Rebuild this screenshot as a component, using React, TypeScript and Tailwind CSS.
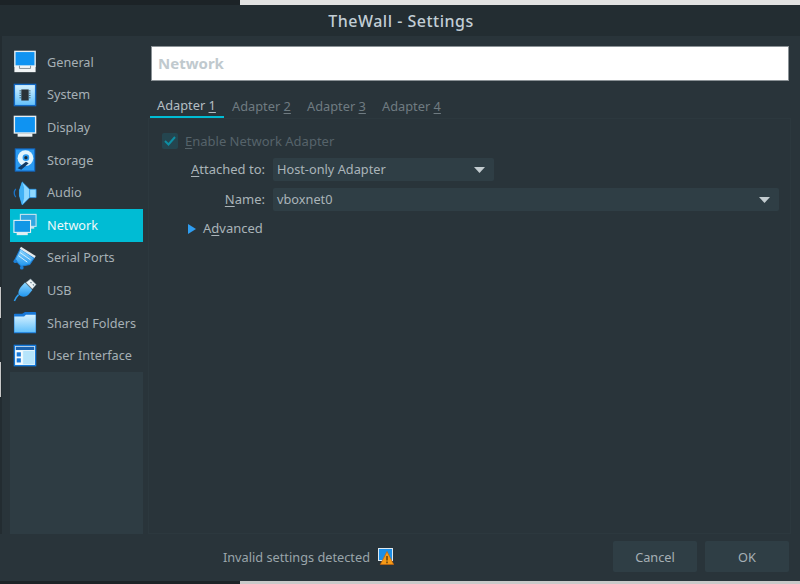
import type { ReactNode } from "react";

const font = "font-['Noto_Sans','Open_Sans',sans-serif]";

function Frame({ children }: { children: ReactNode }) {
  return (
    <svg width="24" height="24" viewBox="0 0 26 26" className="shrink-0">
      <defs>
        <linearGradient id="blueFill" x1="0" y1="0" x2="0" y2="1">
          <stop offset="0" stopColor="#8fd8ff" />
          <stop offset="1" stopColor="#1f95ee" />
        </linearGradient>
        <linearGradient id="paleFill" x1="0" y1="0" x2="0" y2="1">
          <stop offset="0" stopColor="#d6f1ff" />
          <stop offset="1" stopColor="#62c0fb" />
        </linearGradient>
      </defs>
      {children}
    </svg>
  );
}

const GeneralIcon = () => (
  <Frame>
    <rect x="2" y="1.5" width="22" height="16" fill="#0f93f2" stroke="#e6eef2" strokeWidth="1.5" />
    <path d="M1.5 17 h23 v7 h-23z" fill="#f1f4f5" />
    <path d="M7 17 v3 h12 v-3" fill="none" stroke="#7f8a90" strokeWidth="1" />
  </Frame>
);

const SystemIcon = () => (
  <Frame>
    <rect x="1.5" y="1.5" width="23" height="23" fill="url(#paleFill)" stroke="#1268c4" strokeWidth="1.5" />
    <rect x="9" y="7" width="8" height="12" fill="#2a3238" />
    <path d="M7 8.5h2M7 11h2M7 13.5h2M7 16h2M17 8.5h2M17 11h2M17 13.5h2M17 16h2" stroke="#44606f" strokeWidth="1" />
  </Frame>
);

const DisplayIcon = () => (
  <Frame>
    <rect x="1.5" y="1.5" width="23" height="18" fill="#0f93f2" stroke="#e6eef2" strokeWidth="1.5" />
    <path d="M5 20h16v3.5H5z" fill="#eef2f3" />
  </Frame>
);

const StorageIcon = () => (
  <Frame>
    <rect x="2.5" y="1" width="21" height="24" fill="#2a9af0" stroke="#1268c4" strokeWidth="1.2" />
    <circle cx="13.5" cy="11" r="8.5" fill="#e2f5fd" />
    <circle cx="14" cy="10.5" r="3.6" fill="#2a9af0" />
    <circle cx="14" cy="10.5" r="1.8" fill="#1c2b34" />
    <path d="M5 22 L14 15 L17 16.5 L9 23.5z" fill="#123a63" />
  </Frame>
);

const AudioIcon = () => (
  <Frame>
    <path d="M3 8.5 C0.8 11 0.8 15 3 17.5" fill="none" stroke="#1b74c8" strokeWidth="1.4" />
    <path d="M7 10 L10 1 L18 9 L25 9 L25 18 L18 18 L10 26 L7 16z" fill="#8ed8ff" stroke="#2a9af0" strokeWidth="0.8" />
    <path d="M10 1 L7 10 L7 16 L10 26 L12 19 L12 7z" fill="#3fb0f5" />
    <path d="M18 9 L18 18" stroke="#2a9af0" strokeWidth="1" />
  </Frame>
);

const NetworkIcon = () => (
  <Frame>
    <rect x="8" y="1.5" width="17" height="13" fill="#31a6e0" stroke="#c9e4ee" strokeWidth="1.2" />
    <path d="M18 15h5v2h-5z" fill="#c9e4ee" />
    <rect x="1" y="8" width="18" height="13" fill="#1197e6" stroke="#e6f1f5" strokeWidth="1.2" />
    <path d="M4 21h12v3H4z" fill="#e3eef2" />
  </Frame>
);

const SerialIcon = () => (
  <Frame>
    <path d="M8 3 L23 13 L18 20 L9 22 L2 15z" fill="url(#blueFill)" stroke="#1c7fd6" strokeWidth="1.1" />
    <path d="M8 2 L24 12" stroke="#e6ecee" strokeWidth="2.6" />
    <path d="M7.5 7 L19 15M6 10.5 L15.5 17.5" stroke="#dff3fd" strokeWidth="1" />
    <circle cx="2.5" cy="16.5" r="2" fill="#1c7fd6" />
    <circle cx="9.5" cy="23.5" r="2" fill="#1c7fd6" />
  </Frame>
);

const UsbIcon = () => (
  <Frame>
    <path d="M19 1 L25 7 L21 12 L14 5z" fill="#eef4f6" stroke="#8aa0ac" strokeWidth="0.6" />
    <path d="M13 5 L21 13 L17 18 C13 22 8 20 6 18 C5 14 8 10 13 5z" fill="url(#blueFill)" />
    <path d="M6 18 C4 20 2.5 22 1.5 25" fill="none" stroke="#2f9ef0" strokeWidth="1.6" />
    <path d="M19 4.5l1 1M21.5 7l1 1" stroke="#55707e" strokeWidth="1.2" />
  </Frame>
);

const FolderIcon = () => (
  <Frame>
    <path d="M1 4 Q1 3 2 3 L10 3 L13 1 L24 1 Q25 1 25 2 L25 24 L1 24z" fill="#1878d8" />
    <path d="M1.5 6 L12 6 L14 4 L24.5 4 L24.5 23 L1.5 23z" fill="url(#paleFill)" />
  </Frame>
);

const InterfaceIcon = () => (
  <Frame>
    <rect x="1.5" y="1.5" width="23" height="22" fill="#e8f6fd" stroke="#1478d8" strokeWidth="1.5" />
    <rect x="3" y="3" width="20" height="3.5" fill="#1a62ae" />
    <rect x="3" y="7.5" width="7" height="14.5" fill="#f4fafd" />
    <rect x="4" y="9" width="4.5" height="4.5" fill="#1878d8" />
    <rect x="4" y="15.5" width="4.5" height="4.5" fill="#1878d8" />
    <rect x="11" y="7.5" width="12" height="14.5" fill="#b6e4fb" />
  </Frame>
);

const WarningIcon = () => (
  <svg width="16" height="17" viewBox="0 0 16 17" className="shrink-0">
    <rect x="0.5" y="0.5" width="14" height="12" fill="#1c8fe8" stroke="#dfe9ee" strokeWidth="1" />
    <path d="M9 3.5 L15.7 16.5 L2.3 16.5z" fill="#f59a16" stroke="#c9640c" strokeWidth="0.7" />
    <path d="M9 8v4.5M9 13.6v1.6" stroke="#3a2a10" strokeWidth="1.2" />
  </svg>
);

const items = [
  { label: "General", icon: <GeneralIcon /> },
  { label: "System", icon: <SystemIcon /> },
  { label: "Display", icon: <DisplayIcon /> },
  { label: "Storage", icon: <StorageIcon /> },
  { label: "Audio", icon: <AudioIcon /> },
  { label: "Network", icon: <NetworkIcon />, active: true },
  { label: "Serial Ports", icon: <SerialIcon /> },
  { label: "USB", icon: <UsbIcon /> },
  { label: "Shared Folders", icon: <FolderIcon /> },
  { label: "User Interface", icon: <InterfaceIcon /> },
];

const Caret = () => (
  <svg width="11" height="6" viewBox="0 0 11 6" className="shrink-0">
    <path d="M0 0h11L5.5 6z" fill="#c3ccd0" />
  </svg>
);

function Combo({ value, className }: { value: string; className: string }) {
  return (
    <div className={`flex h-[23px] items-center justify-between rounded-[2px] bg-[#2f3e45] pl-[4px] text-[12.75px] text-[#aab4b9] ${className}`}>
      <span className="pt-px">{value}</span>
      <Caret />
    </div>
  );
}

export default function App() {
  return (
    <div className={`relative flex h-[584px] w-[800px] flex-col overflow-hidden bg-[#29343a] text-[13px] ${font}`}>
      <div className="absolute top-[287px] left-0 h-[31px] w-px bg-[#c8c8c8]" />
      <div className="absolute top-[362px] left-0 h-[35px] w-px bg-[#c8c8c8]" />

      <div className="flex h-[5px] shrink-0">
        <div className="w-[240px] bg-[#1c2327]" />
        <div className="flex-1 bg-[#e2e2e2]" />
      </div>
      <div className="flex h-[31px] shrink-0 items-center justify-center bg-[#232d32] pl-[2px] text-[16px] font-medium tracking-[0.5px] text-[#c2ced6]">
        TheWall - Settings
      </div>

      <div className="flex min-h-0 flex-1 border-l-2 border-[#232c31] pt-[10px] pr-[11px] pl-[8px]">
        <div className="flex w-[133px] shrink-0 flex-col bg-[#2e3c43]">
          <div className="bg-[#29343a]">
            {items.map((item) => (
              <div
                key={item.label}
                className={`flex h-[32.6px] items-center gap-[10px] pl-[3px] text-[12.7px] ${item.active ? "bg-[#00bcd4] text-[#eef8fa]" : "text-[#a6b0b5]"}`}
              >
                {item.icon}
                <span className="whitespace-nowrap">{item.label}</span>
              </div>
            ))}
          </div>
        </div>

        <div className="flex min-w-0 flex-1 flex-col pl-[8px]">
          <div className="flex h-[35px] shrink-0 items-center border border-[#8b9296] bg-white pl-[6px] text-[15px] font-bold text-[#c0c9ce]">
            Network
          </div>
          <div className="mt-[13px] -ml-px flex h-[24px] shrink-0 items-start">
            <div className="h-[24px] w-[74px] border-b-2 border-[#00bcd4] pl-[7px] text-[12.8px] leading-[22px] text-[#b4bec3]">
              Adapter <u className="underline-offset-2">1</u>
            </div>
            <div className="ml-[8px] flex">
              {["2", "3", "4"].map((n) => (
                <div key={n} className="w-[75px] text-[12.8px] leading-[24px] text-[#6f7b81]">
                  Adapter <u className="underline-offset-2">{n}</u>
                </div>
              ))}
            </div>
          </div>
          <div className="-mr-[2px] -ml-[3px] min-h-0 flex-1 border border-[#2c383e] pt-[12px]">
            <div className="flex h-[20px] items-center pl-[13px] text-[#56636a]">
              <span className="flex h-[16px] w-[16px] items-center justify-center rounded-[2px] bg-[#24454f]">
                <svg width="12" height="10" viewBox="0 0 12 10">
                  <path d="M1 5l3.5 3.5L11 1" fill="none" stroke="#0e8ea3" strokeWidth="2" />
                </svg>
              </span>
              <span className="ml-[7px] pt-px"><u className="underline-offset-2">E</u>nable Network Adapter</span>
            </div>
            <div className="mt-[7px] flex items-center text-[#aab4b9]">
              <span className="w-[116px] pt-px text-right"><u className="underline-offset-2">A</u>ttached to:</span>
              <Combo value="Host-only Adapter" className="ml-[8px] w-[221px] pr-[9px]" />
            </div>
            <div className="mt-[7px] flex items-center text-[#aab4b9]">
              <span className="w-[116px] pt-px text-right"><u className="underline-offset-2">N</u>ame:</span>
              <Combo value="vboxnet0" className="mr-[11px] ml-[8px] flex-1 pr-[9px]" />
            </div>
            <div className="mt-[8px] flex items-center pl-[39px] text-[#aab4b9]">
              <svg width="8" height="10" viewBox="0 0 8 10" className="shrink-0">
                <path d="M0 0l8 5-8 5z" fill="#2f9df0" />
              </svg>
              <span className="ml-[7px]">A<u className="underline-offset-2">d</u>vanced</span>
            </div>
          </div>
        </div>
      </div>

      <div className="flex h-[47px] shrink-0 items-start pt-[7px] pr-[11px]">
        <div className="flex h-[31px] flex-1 items-center justify-end gap-[8px] pr-[219px] text-[12.75px] text-[#9aa5aa]">
          <span className="pt-[3px]">Invalid settings detected</span>
          <WarningIcon />
        </div>
        <div className="flex gap-[8px] text-[12.75px] text-[#a6b0b5]">
          <div className="flex h-[31px] w-[84px] items-center justify-center rounded-[2px] bg-[#2f3e45] pt-[3px]">Cancel</div>
          <div className="flex h-[31px] w-[84px] items-center justify-center rounded-[2px] bg-[#2f3e45] pt-[3px]">OK</div>
        </div>
      </div>

      <div className="flex h-[3px] shrink-0">
        <div className="w-[240px] bg-[#1c2327]" />
        <div className="flex-1 bg-[#c9c9c9]" />
      </div>
    </div>
  );
}
